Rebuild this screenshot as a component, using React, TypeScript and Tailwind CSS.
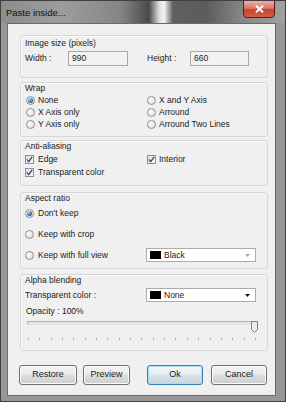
import React from 'react';

const Radio = ({ checked = false }: { checked?: boolean }) => (
  <span className="w-[9px] h-[9px] shrink-0 rounded-full border border-[#8e8f8f] bg-[radial-gradient(circle_at_35%_35%,#ffffff,#d6d6d6)] flex items-center justify-center">
    {checked && (
      <span className="w-[5px] h-[5px] rounded-full bg-[radial-gradient(circle_at_35%_30%,#a9d4f2,#1f5d95_70%)]" />
    )}
  </span>
);

const Check = () => (
  <span className="w-[9px] h-[9px] shrink-0 border border-[#8e8f8f] bg-[linear-gradient(135deg,#dcdcdc,#fbfbfb)] flex items-center justify-center">
    <svg width="7" height="7" viewBox="0 0 7 7">
      <path d="M0.8 3.4 L2.7 5.6 L6.2 0.8" stroke="#35466a" strokeWidth="1.3" fill="none" />
    </svg>
  </span>
);

const Combo = ({ text, dim = false }: { text: string; dim?: boolean }) => (
  <div className="w-[110px] h-[14px] border border-[#acacac] bg-white flex items-center pl-[3px] pr-[5px]">
    <span className="w-[11px] h-[8px] bg-black" />
    <span className="ml-[3px] flex-1 leading-[11px]">{text}</span>
    <svg width="5" height="3" viewBox="0 0 5 3">
      <path d="M0 0 H5 L2.5 3 Z" fill={dim ? '#a8a8a8' : '#111'} />
    </svg>
  </div>
);

const Panel = ({ label, className, children }: { label: string; className: string; children: React.ReactNode }) => (
  <div className={`ml-[12px] w-[248px] border border-[#d7d7d7] rounded-[3px] shadow-[inset_1px_1px_0_#fafafa] ${className}`}>
    <div className="pl-[4px] h-[11px] leading-[11px]">{label}</div>
    {children}
  </div>
);

const Btn = ({ label, w, ok = false, className = '' }: { label: string; w: string; ok?: boolean; className?: string }) => (
  <div
    className={`${w} h-[20px] rounded-[3px] border flex items-center justify-center text-[9px] ${className} ${
      ok
        ? 'border-[#3c7fb1] bg-[linear-gradient(#f3f7f9,#e6edf1_45%,#d7e2e9_50%,#cbd7df)] shadow-[inset_0_0_0_1px_#a9dcf5]'
        : 'border-[#707070] bg-[linear-gradient(#f3f3f3,#ebebeb_45%,#dddddd_50%,#cfcfcf)] shadow-[inset_0_0_0_1px_#fbfbfb]'
    }`}
  >
    {label}
  </div>
);

const ticks = Array.from({ length: 21 }, (_, i) => i);

export default function App() {
  return (
    <div className="w-[286px] h-[402px] bg-[#979797] border border-[#3f3f3f] box-border flex flex-col font-['Liberation_Sans',Arial,sans-serif] text-[8.5px] text-[#1b1b1b] overflow-hidden">
      {/* title bar */}
      <div className="h-[22px] shrink-0 flex items-start justify-between bg-[linear-gradient(90deg,#8c8c8c_0px,#9d9d9d_60px,#858585_120px,#4a4a4a_148px,#dcdcdc_158px,#f4f4f4_163px,#606060_172px,#5c5c5c_205px,#858585_240px,#a3a3a3_286px)]">
        <span className="mt-[6px] ml-[5px] text-[9.5px] leading-[11px] text-[#111]">Paste inside...</span>
        <div className="mr-[10px] -mt-px w-[32px] h-[18px] rounded-b-[4px] border border-[#5a1e16] bg-[linear-gradient(#eab2a6,#d9776a_45%,#c7412f_55%,#d0604a)] flex items-center justify-center">
          <svg width="9" height="8" viewBox="0 0 9 8">
            <path d="M1 0.8 L8 7.2 M8 0.8 L1 7.2" stroke="#fff" strokeWidth="2" />
          </svg>
        </div>
      </div>

      {/* dialog body */}
      <div className="ml-[6px] w-[269px] h-[373px] border border-[#6a6a6a] bg-[#f0f0f0] flex flex-col">
        <Panel label="Image size (pixels)" className="mt-[11px] h-[43px] pt-[2px]">
          <div className="mt-[2px] pl-[4px] flex items-center">
            <span className="w-[43px]">Width :</span>
            <div className="w-[60px] h-[15px] border border-[#a9a9a9] bg-[#f2f2f2] pl-[3px] leading-[13px]">990</div>
            <span className="ml-[19px] w-[43px]">Height :</span>
            <div className="w-[59px] h-[15px] border border-[#a9a9a9] bg-[#f2f2f2] pl-[3px] leading-[13px]">660</div>
          </div>
        </Panel>

        <Panel label="Wrap" className="mt-[4px] h-[55px]">
          <div className="pl-[5px] grid grid-cols-[121px_1fr] auto-rows-[12px]">
            <div className="flex items-center gap-[3px]"><Radio checked />None</div>
            <div className="flex items-center gap-[3px]"><Radio />X and Y Axis</div>
            <div className="flex items-center gap-[3px]"><Radio />X Axis only</div>
            <div className="flex items-center gap-[3px]"><Radio />Arround</div>
            <div className="flex items-center gap-[3px]"><Radio />Y Axis only</div>
            <div className="flex items-center gap-[3px]"><Radio />Arround Two Lines</div>
          </div>
        </Panel>

        <Panel label="Anti-aliasing" className="mt-[3px] h-[46px]">
          <div className="mt-[1px] pl-[4px] grid grid-cols-[122px_1fr] auto-rows-[13px]">
            <div className="flex items-center gap-[4px]"><Check />Edge</div>
            <div className="flex items-center gap-[3px]"><Check />Interior</div>
            <div className="flex items-center gap-[4px]"><Check />Transparent color</div>
          </div>
        </Panel>

        <Panel label="Aspect ratio" className="mt-[6px] h-[77px]">
          <div className="mt-[2px] pl-[4px] flex flex-col gap-[7px]">
            <div className="h-[14px] flex items-center gap-[4px]"><Radio checked />Don't keep</div>
            <div className="h-[14px] flex items-center gap-[4px]"><Radio />Keep with crop</div>
            <div className="h-[14px] flex items-center">
              <div className="w-[121px] flex items-center gap-[4px]"><Radio />Keep with full view</div>
              <Combo text="Black" dim />
            </div>
          </div>
        </Panel>

        <Panel label="Alpha blending" className="mt-[5px] h-[77px]">
          <div className="mt-[2px] pl-[4px] h-[14px] flex items-center">
            <span className="w-[121px]">Transparent color :</span>
            <Combo text="None" />
          </div>
          <div className="mt-[4px] pl-[5px] h-[11px] leading-[11px]">Opacity : 100%</div>
          <div className="relative ml-[6px] w-[229px] h-[12px]">
            <div className="mt-[4px] h-[4px] border border-[#b4b4b4] border-b-[#e4e4e4] bg-[#e6e6e6] rounded-[1px]" />
            <svg className="absolute right-[-2px] top-0" width="7" height="12" viewBox="0 0 7 12">
              <path d="M0.5 0.5 H6.5 V8.5 L3.5 11.5 L0.5 8.5 Z" fill="#ececec" stroke="#7d7d7d" />
            </svg>
          </div>
          <div className="mt-[5px] ml-[7px] w-[228px] h-[2px] flex justify-between">
            {ticks.map((t) => (
              <span key={t} className="w-px h-[2px] bg-[#a5a5a5]" />
            ))}
          </div>
        </Panel>

        <div className="mt-[14px] ml-[11px] flex">
          <Btn label="Restore" w="w-[58px]" />
          <Btn label="Preview" w="w-[47px]" className="ml-[6px]" />
          <Btn label="Ok" w="w-[56px]" ok className="ml-[17px]" />
          <Btn label="Cancel" w="w-[56px]" className="ml-[8px]" />
        </div>
      </div>
    </div>
  );
}
